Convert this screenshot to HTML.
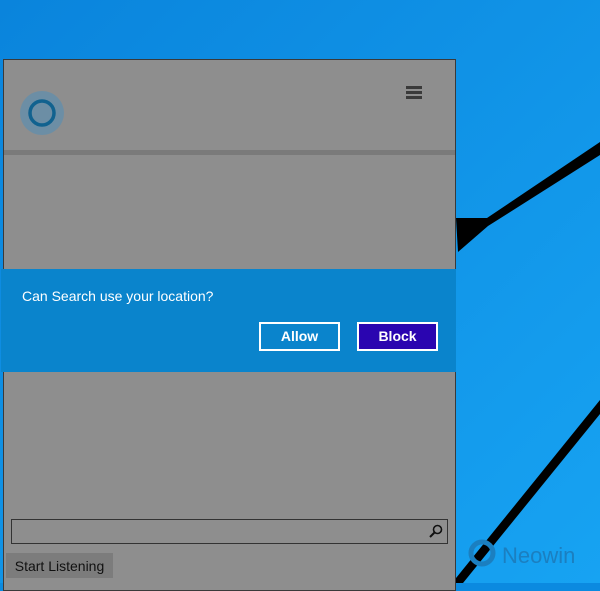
<!DOCTYPE html>
<html><head><style>
html,body{margin:0;padding:0;width:600px;height:583px;overflow:hidden;background:#0b8ae0;font-family:"Liberation Sans",sans-serif}
#bg{position:absolute;left:0;top:0}
.panel{position:absolute;left:3px;top:59px;width:451px;height:530px;background:#8e8e8e;border:1px solid #3a3a3a}
.sep{position:absolute;left:0;top:90px;width:451px;height:5px;background:#7a7a7a}
.band{position:absolute;left:-3px;top:209px;width:455px;height:103px;background:#0a84cc}
.q{position:absolute;left:21px;top:19px;color:#fff;font-size:14px}
.btn{position:absolute;top:53px;width:77px;height:25px;border:2px solid #fff;color:#fff;font-weight:bold;font-size:14px;text-align:center;line-height:25px;box-sizing:content-box}
.search{position:absolute;left:7px;top:459px;width:435px;height:23px;border:1px solid #333}
.sl{position:absolute;left:2px;top:493px;width:107px;height:25px;background:#7c7c7c;color:#111;font-size:14px;line-height:26px;text-align:center}
</style></head><body>
<svg id="bg" width="600" height="583">
<defs><linearGradient id="g" x1="0" y1="0" x2="1" y2="1"><stop offset="0" stop-color="#0a84dc"/><stop offset="1" stop-color="#17a3f2"/></linearGradient></defs>
<rect width="600" height="583" fill="url(#g)"/>
<polygon points="456,218 487,218 600,142 600,155 488,226 458,252" fill="#000"/>
<polygon points="452,583 463,583 600,414 600,400" fill="#000"/>
<text x="502" y="563" font-size="22" fill="#1b7fc0" font-family="Liberation Sans">Neowin</text>
<circle cx="482" cy="553" r="11" fill="none" stroke="#1b7fc0" stroke-width="5"/>
</svg>
<div class="panel">
<svg style="position:absolute;left:15px;top:30px" width="46" height="46"><circle cx="23" cy="23" r="22" fill="#6c8ea5"/><circle cx="23" cy="23" r="12" fill="none" stroke="#11628f" stroke-width="3.5"/></svg>
<div style="position:absolute;left:402px;top:26px;width:16px;height:3px;background:#3a3a3a;box-shadow:0 5px 0 #3a3a3a,0 10px 0 #3a3a3a"></div>
<div class="sep"></div>
<div class="band"><div class="q">Can Search use your location?</div>
<div class="btn" style="left:258px">Allow</div>
<div class="btn" style="left:356px;background:#2a05b0">Block</div></div>
<div class="search"><svg style="position:absolute;right:4px;top:4px" width="14" height="14"><circle cx="8.5" cy="5.5" r="4" fill="none" stroke="#111" stroke-width="1.6"/><line x1="5.5" y1="8.5" x2="1" y2="13" stroke="#111" stroke-width="2"/></svg></div>
<div class="sl">Start Listening</div>
</div>
</body></html>
